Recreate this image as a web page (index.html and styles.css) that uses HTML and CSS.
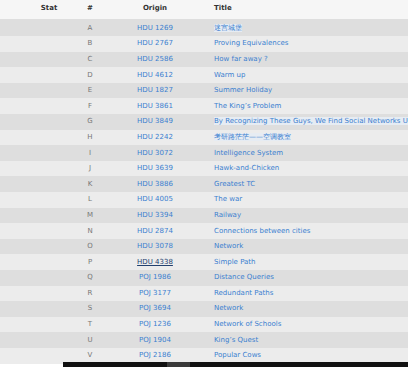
FILE: index.html
```html
<!DOCTYPE html>
<html>
<head>
<meta charset="utf-8">
<link rel="stylesheet" href="styles.css">
</head>
<body>
<div class="wrap">
<table class="plist">
<thead>
<tr><th class="c-stat">Stat</th><th class="c-num">#</th><th class="c-origin">Origin</th><th class="c-title">Title</th></tr>
</thead>
<tbody>
<tr><td></td><td class="num">A</td><td class="origin"><a href="#">HDU 1269</a></td><td class="title"><a class="hl" href="#">迷宫城堡</a></td></tr>
<tr><td></td><td class="num">B</td><td class="origin"><a href="#">HDU 2767</a></td><td class="title"><a href="#">Proving Equivalences</a></td></tr>
<tr><td></td><td class="num">C</td><td class="origin"><a href="#">HDU 2586</a></td><td class="title"><a href="#">How far away ?</a></td></tr>
<tr><td></td><td class="num">D</td><td class="origin"><a href="#">HDU 4612</a></td><td class="title"><a href="#">Warm up</a></td></tr>
<tr><td></td><td class="num">E</td><td class="origin"><a href="#">HDU 1827</a></td><td class="title"><a href="#">Summer Holiday</a></td></tr>
<tr><td></td><td class="num">F</td><td class="origin"><a href="#">HDU 3861</a></td><td class="title"><a href="#">The King’s Problem</a></td></tr>
<tr><td></td><td class="num">G</td><td class="origin"><a href="#">HDU 3849</a></td><td class="title"><a class="hl" href="#">By Recognizing These Guys, We Find Social Networks Useful</a></td></tr>
<tr><td></td><td class="num">H</td><td class="origin"><a href="#">HDU 2242</a></td><td class="title"><a class="hl" href="#">考研路茫茫——空调教室</a></td></tr>
<tr><td></td><td class="num">I</td><td class="origin"><a href="#">HDU 3072</a></td><td class="title"><a href="#">Intelligence System</a></td></tr>
<tr><td></td><td class="num">J</td><td class="origin"><a href="#">HDU 3639</a></td><td class="title"><a href="#">Hawk-and-Chicken</a></td></tr>
<tr><td></td><td class="num">K</td><td class="origin"><a href="#">HDU 3886</a></td><td class="title"><a href="#">Greatest TC</a></td></tr>
<tr><td></td><td class="num">L</td><td class="origin"><a href="#">HDU 4005</a></td><td class="title"><a href="#">The war</a></td></tr>
<tr><td></td><td class="num">M</td><td class="origin"><a href="#">HDU 3394</a></td><td class="title"><a href="#">Railway</a></td></tr>
<tr><td></td><td class="num">N</td><td class="origin"><a href="#">HDU 2874</a></td><td class="title"><a href="#">Connections between cities</a></td></tr>
<tr><td></td><td class="num">O</td><td class="origin"><a href="#">HDU 3078</a></td><td class="title"><a href="#">Network</a></td></tr>
<tr><td></td><td class="num">P</td><td class="origin"><a class="hover" href="#">HDU 4338</a></td><td class="title"><a href="#">Simple Path</a></td></tr>
<tr><td></td><td class="num">Q</td><td class="origin"><a href="#">POJ 1986</a></td><td class="title"><a href="#">Distance Queries</a></td></tr>
<tr><td></td><td class="num">R</td><td class="origin"><a href="#">POJ 3177</a></td><td class="title"><a href="#">Redundant Paths</a></td></tr>
<tr><td></td><td class="num">S</td><td class="origin"><a href="#">POJ 3694</a></td><td class="title"><a href="#">Network</a></td></tr>
<tr><td></td><td class="num">T</td><td class="origin"><a href="#">POJ 1236</a></td><td class="title"><a href="#">Network of Schools</a></td></tr>
<tr><td></td><td class="num">U</td><td class="origin"><a href="#">POJ 1904</a></td><td class="title"><a href="#">King’s Quest</a></td></tr>
<tr><td></td><td class="num">V</td><td class="origin"><a href="#">POJ 2186</a></td><td class="title"><a href="#">Popular Cows</a></td></tr>
</tbody>
</table>
</div>
<div class="taskbar"><span class="seg"></span></div>
</body>
</html>
```
FILE: styles.css
```css
html, body {
  margin: 0;
  padding: 0;
  background: #ffffff;
  height: 100%;
  overflow: hidden;
}
body {
  font-family: "DejaVu Sans", Verdana, sans-serif;
  font-size: 7px;
  color: #555555;
}
.wrap {
  width: 408px;
  overflow: hidden;
}
.plist {
  border-collapse: collapse;
  width: 480px;
  table-layout: fixed;
}
.c-stat { width: 58px; }
.c-num { width: 24px; }
.c-origin { width: 106px; }
.c-title { width: 266px; }
th {
  height: 15px;
  padding: 0 0 4px 0;
  font-weight: bold;
  color: #333333;
  background: #f6f6f6;
  text-align: center;
  vertical-align: middle;
}
th.c-stat { padding-left: 20px; }
th.c-title { text-align: left; padding-left: 6px; }
td {
  height: 15.6px;
  padding: 0;
  line-height: 15px;
  white-space: nowrap;
  overflow: hidden;
}
tbody tr:first-child td { padding-top: 1.5px; }
tbody tr:nth-child(odd) td { background: #dedede; }
tbody tr:nth-child(even) td { background: #ececec; }
td.num { text-align: center; color: #777777; }
td.origin { text-align: center; }
td.title { text-align: left; padding-left: 6px; }
a {
  color: #3b7fd0;
  text-decoration: none;
}
a.hl { background: #e6ecf3; }
a.hover {
  color: #23406e;
  text-decoration: underline;
}
.taskbar {
  position: fixed;
  left: 63px;
  right: 0;
  bottom: 0;
  height: 5px;
  background: #111111;
}
.taskbar .seg {
  position: absolute;
  left: 104px;
  top: 0;
  width: 23px;
  height: 5px;
  background: #3a3a3a;
}
```
